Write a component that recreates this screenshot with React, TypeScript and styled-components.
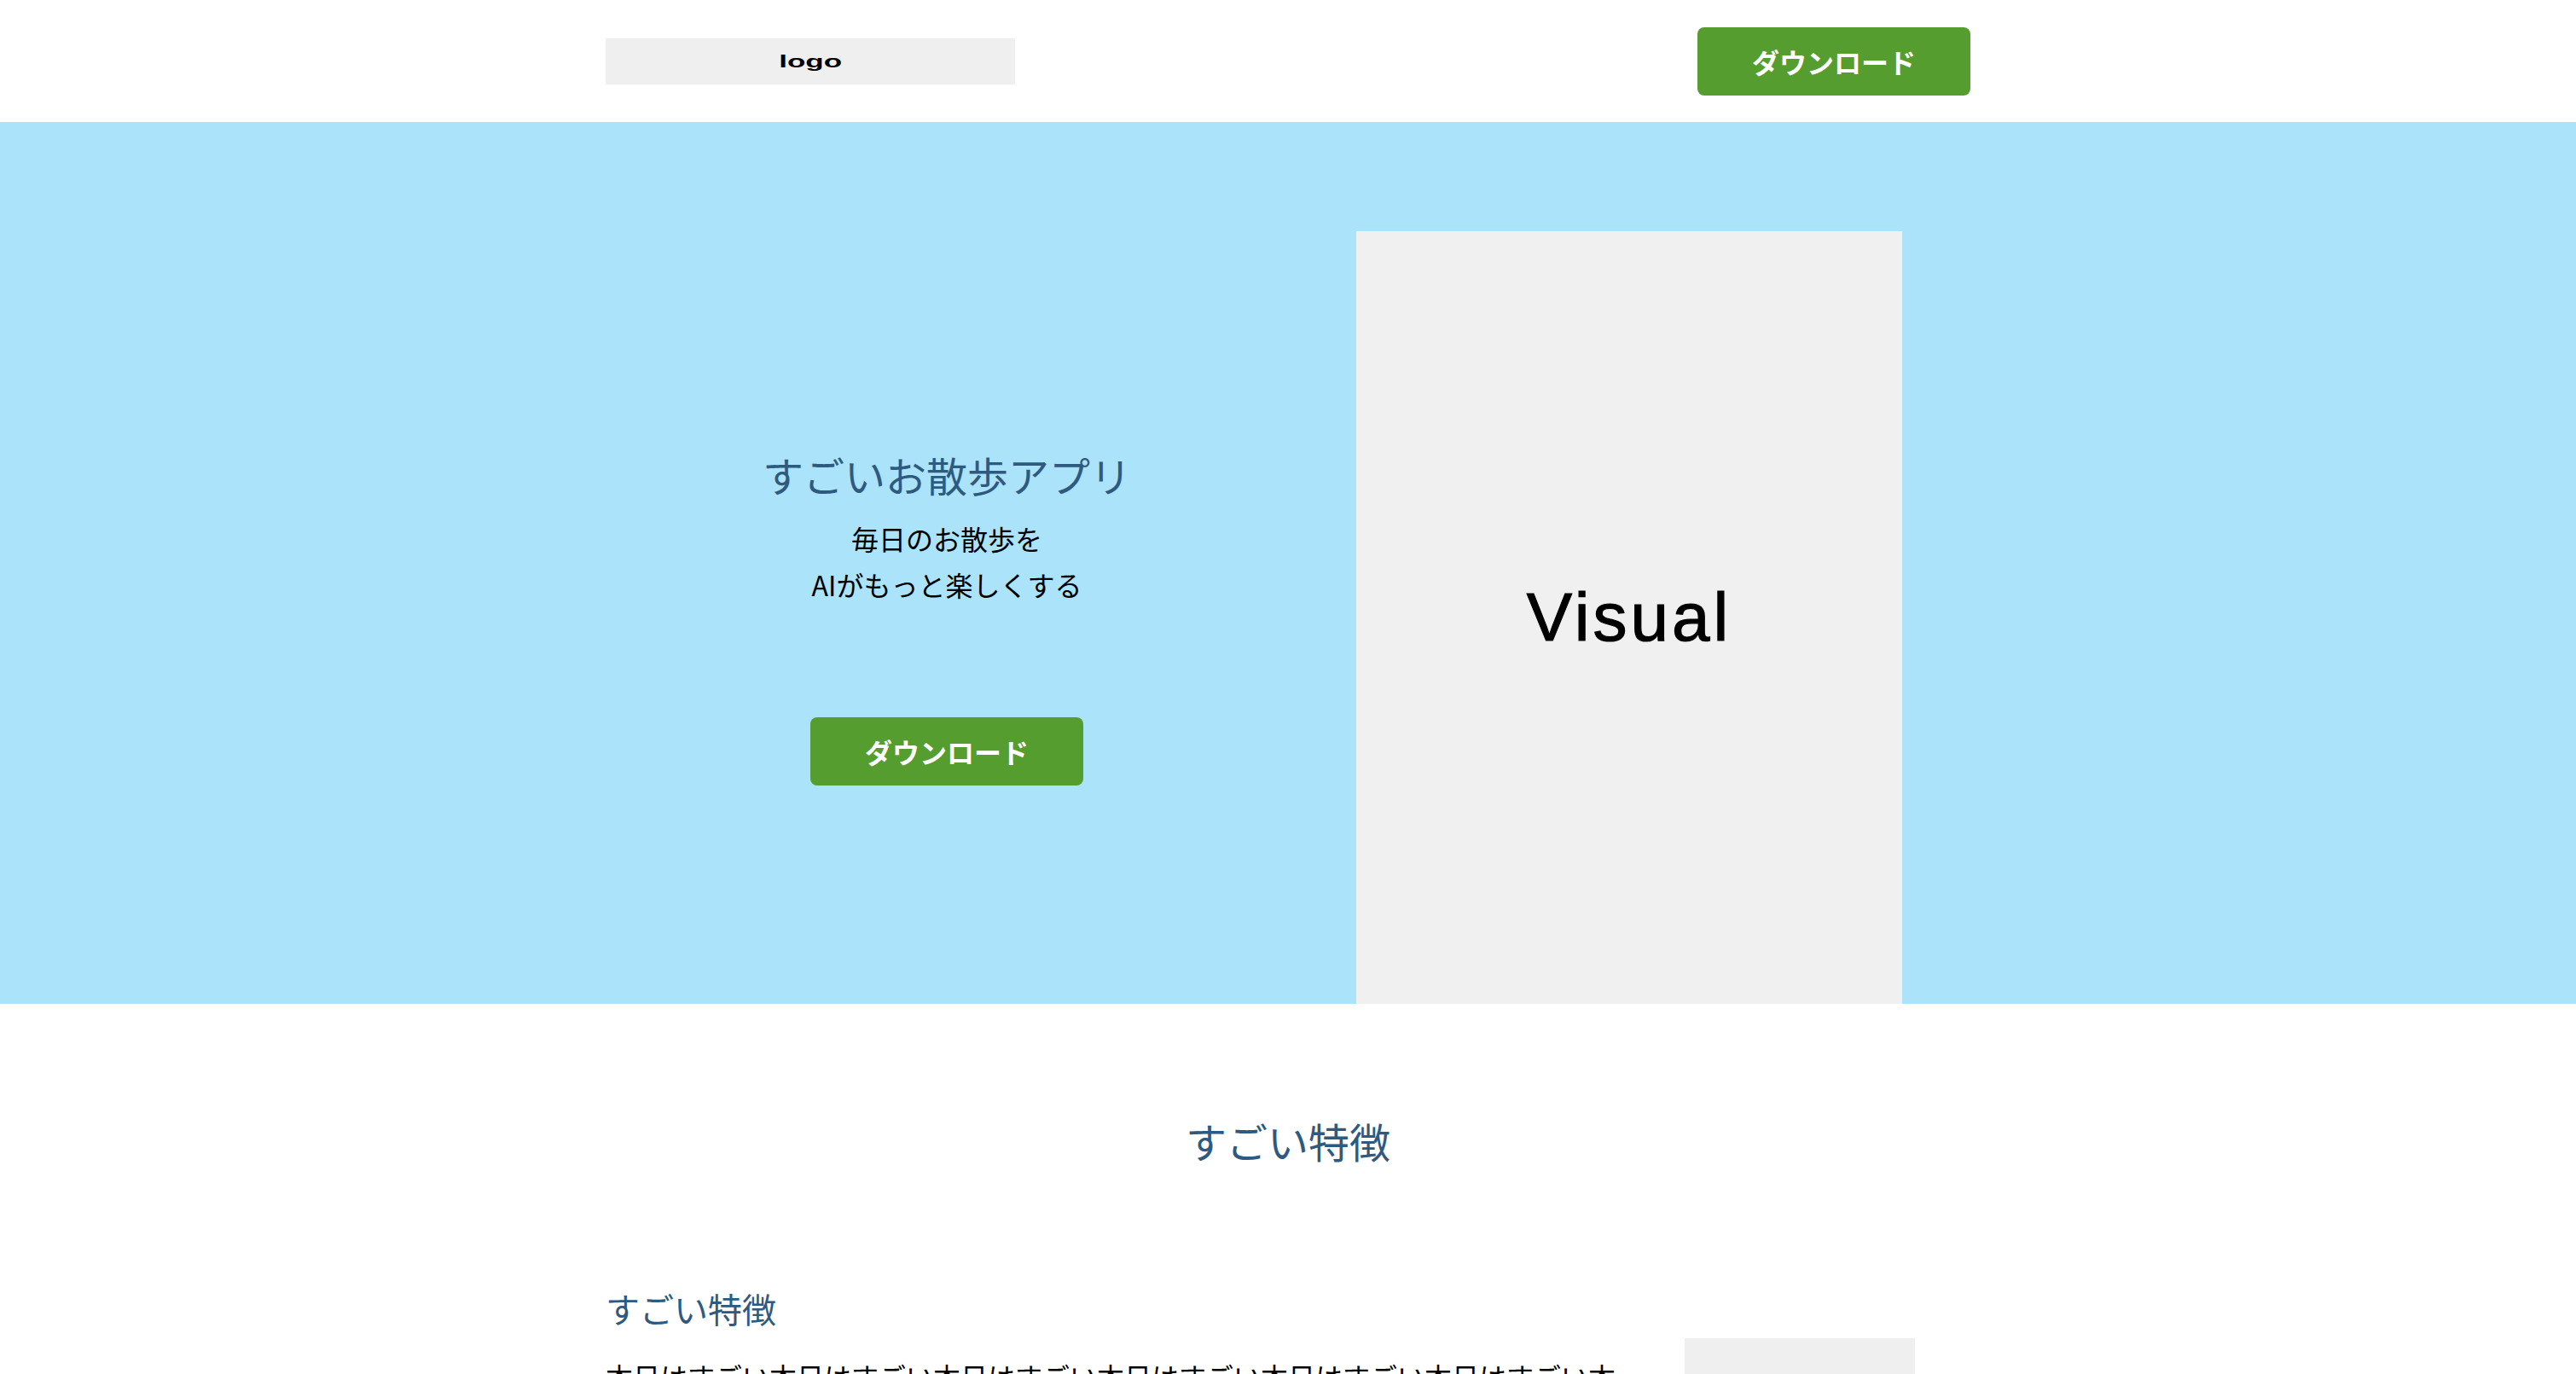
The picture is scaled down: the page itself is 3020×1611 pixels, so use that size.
import React from "react";
import styled, { createGlobalStyle } from "styled-components";

const GlobalStyle = createGlobalStyle`
  body {
    margin: 0;
    background: #ffffff;
    font-family: "Noto Sans CJK JP", "Noto Sans", sans-serif;
    color: #000000;
  }
`;

const Inner = styled.div`
  width: 1600px;
  margin: 0 auto;
`;

const Header = styled.header`
  height: 143px;
  background: #ffffff;
`;

const HeaderInner = styled(Inner)`
  height: 100%;
  display: flex;
  justify-content: space-between;
  align-items: center;
`;

const Logo = styled.div`
  width: 480px;
  height: 54px;
  background: #efefef;
  display: flex;
  justify-content: center;
  align-items: center;
`;

const LogoLabel = styled.span`
  display: inline-block;
  font-family: "Liberation Sans", Arial, sans-serif;
  font-weight: 700;
  font-size: 20px;
  line-height: 1;
  transform: scaleX(1.75);
`;

const DownloadButton = styled.a<{ $top?: number }>`
  display: flex;
  justify-content: center;
  align-items: center;
  width: 320px;
  height: 80px;
  margin-top: ${(p) => p.$top || 0}px;
  border-radius: 8px;
  background: #549d2e;
  color: #ffffff;
  font-size: 32px;
  font-weight: 700;
  text-decoration: none;
`;

const Hero = styled.section`
  height: 1034px;
  padding-top: 128px;
  box-sizing: border-box;
  background: #aae3fa;
  overflow: hidden;
`;

const HeroInner = styled(Inner)`
  display: flex;
  align-items: center;
`;

const HeroText = styled.div`
  flex: 1;
  display: flex;
  flex-direction: column;
  align-items: center;
  padding-bottom: 8px;
  text-align: center;
`;

const HeroTitle = styled.h1`
  margin: 0;
  font-size: 48px;
  font-weight: 400;
  line-height: 72px;
  color: #2f5a7f;
`;

const Lead = styled.p`
  margin: 12px 0 0;
  font-size: 32px;
  line-height: 54px;
`;

const HeroVisualCol = styled.div`
  flex: 1;
  display: flex;
  justify-content: center;
`;

const Visual = styled.div`
  width: 640px;
  height: 906px;
  background: #f0f0f0;
  display: flex;
  justify-content: center;
  align-items: center;
  font-family: "Liberation Sans", Arial, sans-serif;
  font-weight: 400;
  font-size: 80px;
  letter-spacing: 4px;
  -webkit-text-stroke: 1.2px #000000;
`;

const Features = styled.section`
  padding-top: 124px;
`;

const SectionTitle = styled.h2`
  margin: 0;
  font-size: 48px;
  font-weight: 400;
  line-height: 72px;
  text-align: center;
  color: #2f5a7f;
`;

const FeatureItem = styled.article`
  margin-top: 131px;
`;

const FeatureTitle = styled.h3`
  margin: 0;
  font-size: 40px;
  font-weight: 400;
  line-height: 60px;
  color: #2f5a7f;
`;

const FeatureRow = styled.div`
  display: flex;
  margin-top: 5px;
`;

const FeatureText = styled.p`
  flex: 0 0 1200px;
  margin: 0;
  padding-top: 17px;
  font-size: 32px;
  line-height: 54px;
`;

const FeatureImageCol = styled.div`
  flex: 1;
  display: flex;
  justify-content: center;
`;

const FeatureImage = styled.div`
  width: 270px;
  height: 200px;
  background: #efefef;
`;

const App = () => {
  return (
    <>
      <GlobalStyle />
      <Header>
        <HeaderInner>
          <Logo>
            <LogoLabel>logo</LogoLabel>
          </Logo>
          <DownloadButton href="#">ダウンロード</DownloadButton>
        </HeaderInner>
      </Header>
      <Hero>
        <HeroInner>
          <HeroText>
            <HeroTitle>すごいお散歩アプリ</HeroTitle>
            <Lead>
              毎日のお散歩を
              <br />
              AIがもっと楽しくする
            </Lead>
            <DownloadButton href="#" $top={129}>
              ダウンロード
            </DownloadButton>
          </HeroText>
          <HeroVisualCol>
            <Visual>Visual</Visual>
          </HeroVisualCol>
        </HeroInner>
      </Hero>
      <Features>
        <Inner>
          <SectionTitle>すごい特徴</SectionTitle>
          <FeatureItem>
            <FeatureTitle>すごい特徴</FeatureTitle>
            <FeatureRow>
              <FeatureText>{"本日はすごい".repeat(20)}</FeatureText>
              <FeatureImageCol>
                <FeatureImage />
              </FeatureImageCol>
            </FeatureRow>
          </FeatureItem>
        </Inner>
      </Features>
    </>
  );
};

export default App;
